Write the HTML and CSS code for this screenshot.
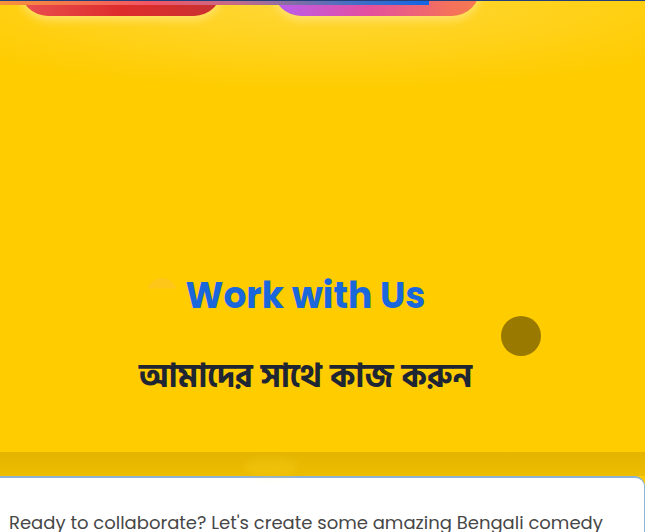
FILE: index.html
```html
<!DOCTYPE html>
<html lang="en">
<head>
<meta charset="utf-8">
<title>Work with Us</title>
<link rel="stylesheet" href="styles.css">
</head>
<body>
<div class="progress"><div class="progress-fill" style="width:66.5%"></div></div>
<section class="hero">
  <div class="pills">
    <a class="pill pill-red" href="#">Watch</a>
    <a class="pill pill-grad" href="#">Subscribe</a>
  </div>
  <div class="hero-body">
    <span class="blob"></span>
    <h2 class="title">Work with Us</h2>
    <p class="subtitle">আমাদের সাথে কাজ করুন</p>
    <span class="dot"></span>
  </div>
</section>
<div class="band"><span class="band-glow"></span></div>
<section class="card">
  <p class="lead">Ready to collaborate? Let's create some amazing Bengali comedy together!</p>
</section>
</body>
</html>
```

FILE: styles.css
```css
* { box-sizing: border-box; }
html, body { margin: 0; padding: 0; }
body {
  background: #ffcc00;
  font-family: "Poppins", "Inter", sans-serif;
  overflow: hidden;
  height: 532px;
}
.progress {
  position: fixed;
  top: 0; left: 0; right: 0;
  height: 5px;
  border-top: 1px solid #24407a;
  z-index: 5;
}
.progress-fill {
  height: 4px;
  background: linear-gradient(90deg, #f7923a 0%, #f25564 35%, #c46b8a 55%, #4c6fbf 80%, #1166e6 100%);
}
.hero {
  position: relative;
  display: flex;
  flex-direction: column;
  height: 452px;
  background: radial-gradient(ellipse 70% 20% at 50% 0%, #ffd83a 0%, #ffcc00 100%);
}
.pills {
  display: flex;
  gap: 51px;
  padding-left: 20px;
  margin-top: -40px;
}
.pill {
  display: block;
  height: 56px;
  border-radius: 28px;
  color: transparent;
  text-decoration: none;
  box-shadow: 0 4px 10px rgba(255, 230, 120, 0.9);
}
.pill-red {
  width: 202px;
  background: linear-gradient(90deg, #ea5151 0%, #dd2c2c 50%, #c93232 100%);
}
.pill-grad {
  width: 207px;
  background: linear-gradient(90deg, #b85ef0 0%, #e24fa0 45%, #f4715c 85%, #f57a4f 100%);
}
.hero-body {
  position: relative;
  display: flex;
  flex-direction: column;
  align-items: center;
  padding: 258px 34px 0 0;
}
.title {
  margin: 0;
  font-family: "Poppins", "Inter", sans-serif;
  font-weight: 700;
  font-size: 36px;
  line-height: 44px;
  color: #1a67dc;
}
.subtitle {
  margin: 37px 0 0;
  font-family: "Hind Siliguri", "Noto Sans Bengali", "Noto Sans", sans-serif;
  font-weight: 700;
  font-size: 32.7px;
  line-height: 44px;
  color: #1f2633;
}
.blob {
  position: absolute;
  left: 147px;
  top: 262px;
  width: 30px;
  height: 30px;
  border-radius: 50%;
  background: #ffc61a;
  clip-path: inset(0 0 65% 0);
}
.dot {
  position: absolute;
  left: 501px;
  top: 300px;
  width: 40px;
  height: 40px;
  border-radius: 50%;
  background: #9a7900;
}
.band {
  position: relative;
  height: 24px;
  background: linear-gradient(180deg, #e4b400 0%, #ecbd00 100%);
}
.band-glow {
  position: absolute;
  left: 245px;
  top: 6px;
  width: 52px;
  height: 18px;
  border-radius: 40%;
  background: rgba(255, 210, 30, 0.25);
  filter: blur(3px);
}
.card {
  background: #fff;
  border-top: 2px solid #8fb3d6;
  border-right: 1px solid #8fb3d6;
  border-top-right-radius: 10px;
  padding: 31px 9px 0;
  height: 80px;
}
.lead {
  margin: 0;
  max-width: 625px;
  font-family: "Poppins", "Open Sans", sans-serif;
  font-size: 18px;
  line-height: 28px;
  color: #474747;
}
```
